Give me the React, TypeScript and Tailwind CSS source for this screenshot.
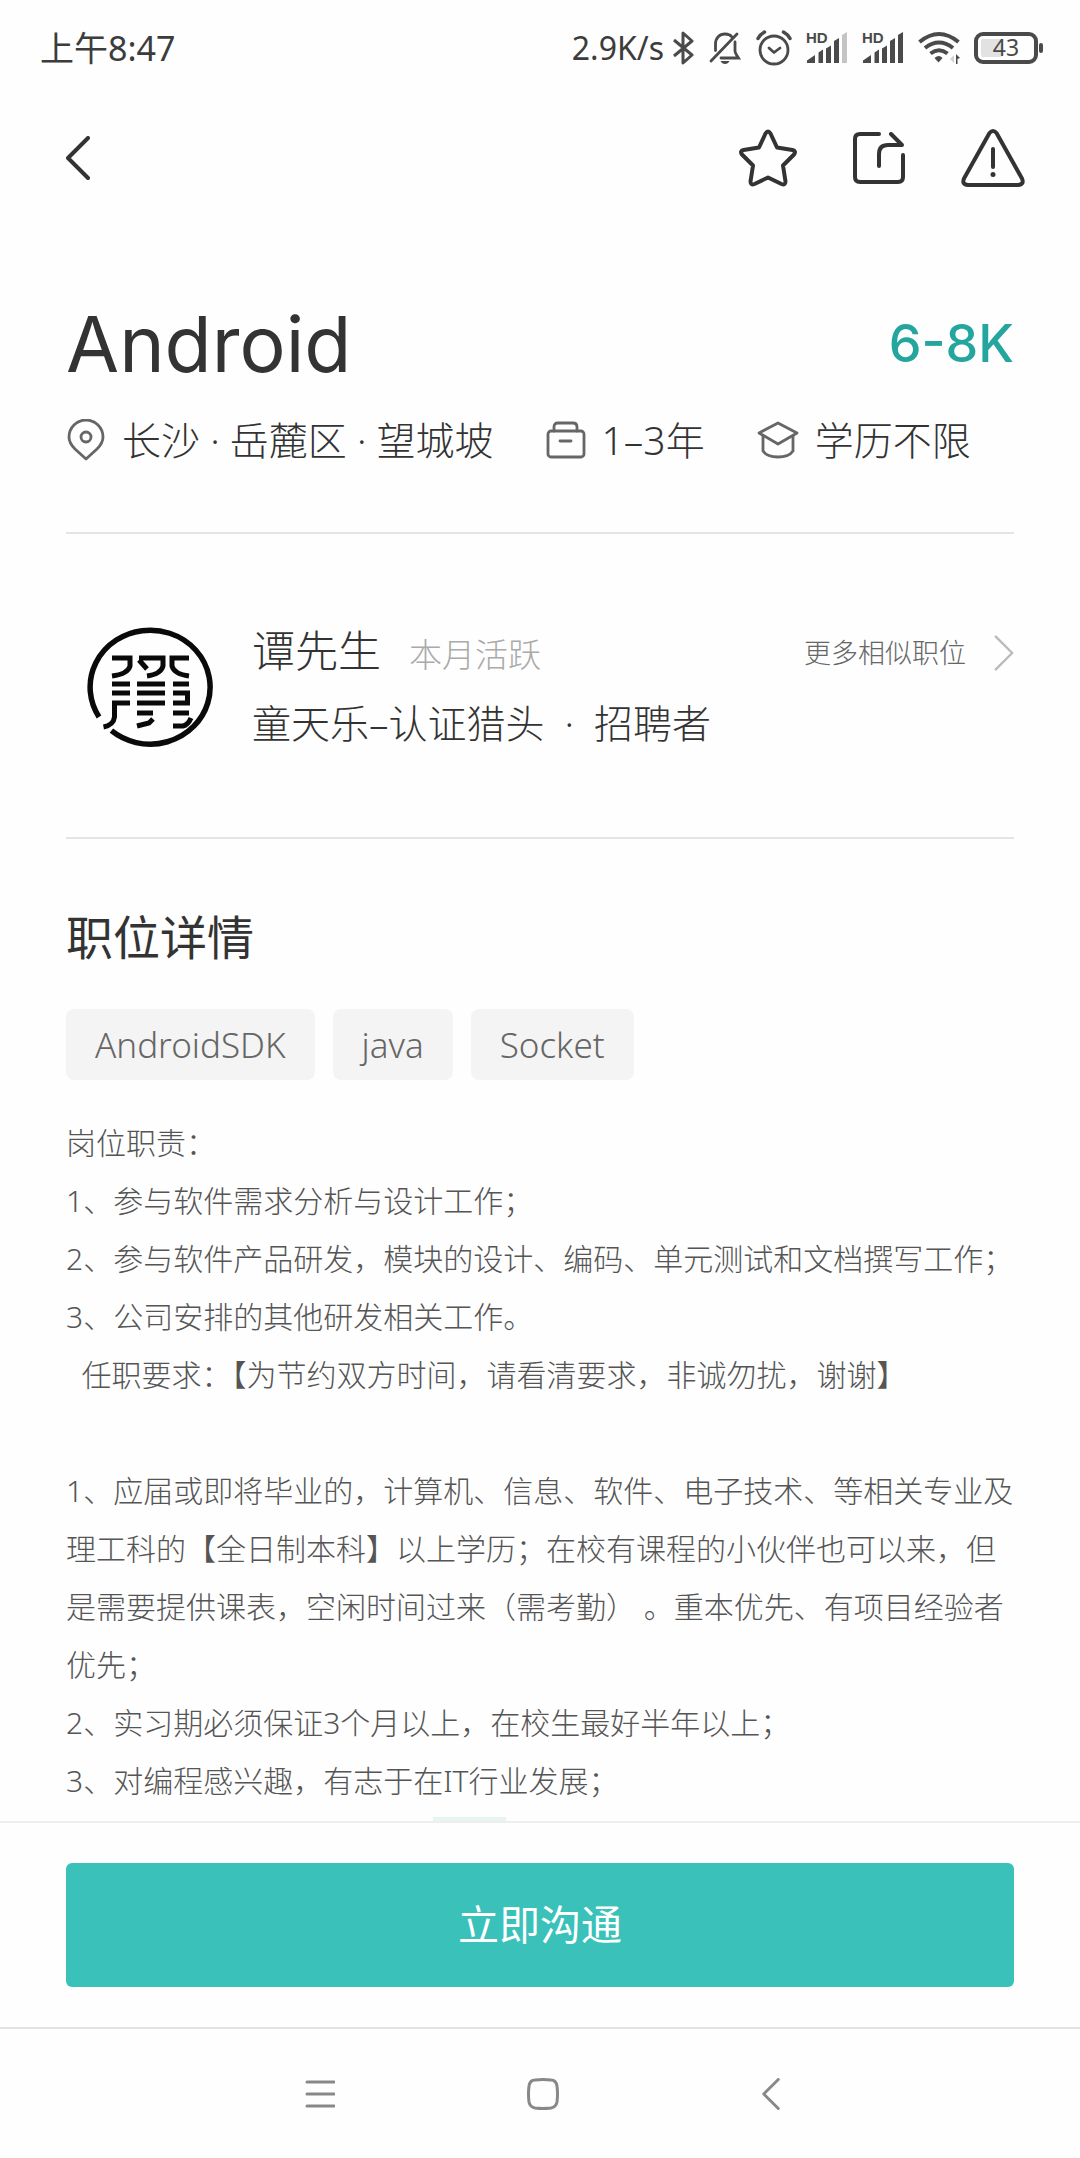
import type { ReactNode } from "react";

const tags = ["AndroidSDK", "java", "Socket"];

const details = [
  "岗位职责：",
  "1、参与软件需求分析与设计工作；",
  "2、参与软件产品研发，模块的设计、编码、单元测试和文档撰写工作；",
  "3、公司安排的其他研发相关工作。",
  "  任职要求：【为节约双方时间，请看清要求，非诚勿扰，谢谢】",
  "",
  "1、应届或即将毕业的，计算机、信息、软件、电子技术、等相关专业及理工科的【全日制本科】以上学历；在校有课程的小伙伴也可以来，但是需要提供课表，空闲时间过来（需考勤） 。重本优先、有项目经验者优先；",
  "2、实习期必须保证3个月以上，在校生最好半年以上；",
  "3、对编程感兴趣，有志于在IT行业发展；",
];

function BluetoothIcon() {
  return (
    <svg viewBox="0 0 22 36" className="h-9 w-[22px]" fill="none" stroke="#4a4a4a" strokeWidth="3" strokeLinejoin="round">
      <path d="M2 10l18 15-9 8V3l9 8L2 26" />
    </svg>
  );
}

function MutedBellIcon() {
  return (
    <svg viewBox="0 0 34 36" className="h-9 w-[34px]" fill="none" stroke="#4a4a4a" strokeWidth="2.8" strokeLinecap="round">
      <path d="M7.5 20.5V14c0-6 4-10 9.5-10 3 0 5.500 1 7 3M27 12v9c0 2 1.500 4 3.500 7H13" />
      <path d="M3 31L29 4" />
      <path d="M12.500 31h9c-1 2-2.500 3-4.500 3s-3.500-1-4.500-3z" fill="#4a4a4a" stroke="none" />
    </svg>
  );
}

function AlarmIcon() {
  return (
    <svg viewBox="0 0 36 36" className="size-9" fill="none" stroke="#4a4a4a" strokeWidth="2.8" strokeLinecap="round" strokeLinejoin="round">
      <circle cx="18" cy="20" r="14" />
      <path d="M13 18l5 4.500 6-4.500" />
      <path d="M2 8.500q2-4 6.500-6.500M34 8.500q-2-4-6.500-6.500" strokeWidth="3.500" />
    </svg>
  );
}

function SignalIcon({ weak }: { weak?: boolean }) {
  return (
    <svg viewBox="0 0 42 36" className="h-9 w-[42px]" fill="#4a4a4a">
      <text x="0" y="13" fontSize="15" fontWeight="700" fontFamily="Liberation Sans, sans-serif">HD</text>
      <path d="M1 33v-2.500l8-5.500v8zM12.500 33V22.500l4.500-3V33zM20 33V18.500l5-3V33zM28 33V11l5-3v25z" />
      <path d="M36 33V5l5-3v31z" fill={weak ? "#c4c4c4" : "#4a4a4a"} />
    </svg>
  );
}

function WifiIcon() {
  return (
    <svg viewBox="0 0 42 36" className="h-9 w-[42px]" fill="none" stroke="#4a4a4a" strokeWidth="4">
      <path d="M1.500 12q19.500-16 39 0M7 18q14-11 28 0M12.500 23.500q8.500-6.500 17 0" />
      <path d="M16.500 28q4.500-4 8 0l-4 4.500z" fill="#4a4a4a" stroke="none" />
      <path d="M38 24v10h1.500v-5l2.500-1z" fill="#4a4a4a" stroke="none" />
      <path d="M36 25v8l-4-4z" fill="#d0d0d0" stroke="none" />
    </svg>
  );
}

function BatteryIcon() {
  return (
    <svg viewBox="0 0 70 32" className="h-8 w-[70px]">
      <rect x="2" y="2" width="60" height="28" rx="7" fill="none" stroke="#4a4a4a" strokeWidth="4" />
      <rect x="7" y="7" width="21" height="18" rx="2" fill="#e2e2e2" />
      <rect x="65" y="11" width="4" height="10" rx="2" fill="#4a4a4a" />
      <text x="32" y="24" textAnchor="middle" fontSize="23" fill="#4a4a4a" fontFamily="Noto Sans, sans-serif">43</text>
    </svg>
  );
}

function IconButton({ label, children }: { label: string; children: ReactNode }) {
  return (
    <button type="button" aria-label={label} className="flex items-center justify-center">
      {children}
    </button>
  );
}

function Chevron({ className }: { className: string }) {
  return (
    <svg viewBox="0 0 24 44" className={className} fill="none" stroke="currentColor" strokeLinecap="round" strokeLinejoin="round">
      <path d="M22 2L2 22l20 20" />
    </svg>
  );
}

function Avatar() {
  return (
    <svg viewBox="0 0 128 122" className="h-[122px] w-32 shrink-0" fill="none" stroke="#0a0a0a" strokeWidth="5">
      <path d="M13 91A60 57 0 1 1 25.400 104.700" strokeWidth="5.500" />
      <path d="M26 32h18v8q-2 8-18 10M53 32h24v8q-2 8-16 10M53 34l8 9M103 32H86v8q2 8 17 10" />
      <path d="M26 58h18M51 58h28M87 58h16M26 67h18M51 67h28M51 77h28M87 67h14.500v10H87M87 87h16" />
      <path d="M44 77H28.500v14q-1 8-11 10M51 87h16M67 93l-4 4-12 3M87 100h10q5-1 8-8" />
    </svg>
  );
}

export default function App() {
  return (
    <div className="flex min-h-screen flex-col bg-[#fefefe] font-['Noto_Sans','Noto_Sans_CJK_SC',sans-serif] font-light text-[#333333]">
      <header>
        <div className="flex h-24 items-center justify-between pr-9 pl-10 font-normal text-[#3c3c3c]">
          <span className="text-[34px]">上午8:47</span>
          <div className="flex items-center">
            <span className="mr-2 text-[32px]">2.9K/s</span>
            <div className="flex items-center gap-[14px]">
              <BluetoothIcon />
              <MutedBellIcon />
              <AlarmIcon />
              <SignalIcon weak />
              <SignalIcon />
              <WifiIcon />
              <BatteryIcon />
            </div>
          </div>
        </div>
        <nav className="flex h-[124px] items-center justify-between pr-[55px] pl-[66px]">
          <IconButton label="返回">
            <Chevron className="h-11 w-6 stroke-4" />
          </IconButton>
          <div className="flex items-center gap-14">
            <IconButton label="收藏">
              <svg viewBox="0 0 58 58" className="size-[58px]" fill="none" stroke="currentColor" strokeWidth="4" strokeLinejoin="round">
                <path d="M26.500 4.500q2.500-4 5 0l6.500 14 15.500 2.500q4 1 1.500 4.500L44 36.500l2.500 16q0 4-4 2.500L29 48.500 15.500 55q-4 1.500-4-2.500l2.500-16L3 25.500q-2.500-3.500 1.500-4.500L20 18.500z" />
              </svg>
            </IconButton>
            <IconButton label="分享">
              <svg viewBox="0 0 52 52" className="size-[52px]" fill="none" stroke="currentColor" strokeWidth="4" strokeLinecap="round" strokeLinejoin="round">
                <path d="M26 2H7q-5 0-5 5v38q0 5 5 5h38q5 0 5-5V23" />
                <path d="M26 34V22q0-9 9-9h14L38 2" />
              </svg>
            </IconButton>
            <IconButton label="举报">
              <svg viewBox="0 0 64 58" className="h-[58px] w-16" fill="none" stroke="currentColor" strokeWidth="4" strokeLinecap="round" strokeLinejoin="round">
                <path d="M28.500 4q3.500-4 7 0L61 49.500q2.500 6-4 6.500H7q-6.500-.5-4-6.500z" />
                <path d="M32 20v18" />
                <path d="M32 45.500v.1" strokeWidth="5" />
              </svg>
            </IconButton>
          </div>
        </nav>
      </header>

      <main className="flex-1 px-[66px] pt-[84px]">
        <section className="border-b-2 border-[#e4e4e4] pb-16">
          <div className="flex items-center justify-between font-[Inter]">
            <h1 className="text-[77px] leading-20 font-normal">Android</h1>
            <p className="text-[52px] leading-20 font-medium text-[#24a69f]">6-8K</p>
          </div>
          <ul className="mt-7 flex items-center gap-[52px] text-[39px] leading-14">
            <li className="flex items-center gap-4">
              <svg viewBox="0 0 40 42" className="h-[42px] w-10" fill="none" stroke="#666666" strokeWidth="2.8" strokeLinejoin="round">
                <path d="M20 40L9 30Q3 24 3 18a17 17 0 0 1 34 0q0 6-6 12z" />
                <circle cx="20" cy="18" r="5" />
              </svg>
              长沙 · 岳麓区 · 望城坡
            </li>
            <li className="flex items-center gap-4">
              <svg viewBox="0 0 40 38" className="h-[38px] w-10" fill="none" stroke="#666666" strokeWidth="2.8" strokeLinecap="round" strokeLinejoin="round">
                <rect x="2" y="10" width="36" height="26" rx="3" />
                <path d="M8 10V6q0-4 4-4h15q4 0 4 4v4M14 20h11" />
              </svg>
              1–3年
            </li>
            <li className="flex items-center gap-4">
              <svg viewBox="0 0 42 38" className="h-[38px] w-[42px]" fill="none" stroke="#666666" strokeWidth="2.8" strokeLinejoin="round">
                <path d="M21 2l19 10-19 11L2 12z" />
                <path d="M6 15v15q4 6 15 6t15-6V15" />
              </svg>
              学历不限
            </li>
          </ul>
        </section>

        <section className="flex items-center gap-[38px] border-b-2 border-[#e4e4e4] pt-[89px] pb-[86px] pl-5">
          <Avatar />
          <div className="flex-1">
            <div className="flex items-center justify-between">
              <h2 className="text-[43px] leading-14">
                谭先生<span className="ml-7 text-[33px] text-[#aaaaaa]">本月活跃</span>
              </h2>
              <a href="#similar" className="flex items-center gap-7 text-[27px] text-[#666666]">
                更多相似职位
                <Chevron className="h-9 w-5 rotate-180 stroke-3 text-[#bbbbbb]" />
              </a>
            </div>
            <p className="mt-3 text-[39px] leading-14">
              童天乐–认证猎头<span className="mx-5">·</span>招聘者
            </p>
          </div>
        </section>

        <section className="pt-[66px]">
          <h2 className="text-[47px] leading-16 font-normal">职位详情</h2>
          <ul className="mt-10 flex gap-[18px]">
            {tags.map((tag) => (
              <li key={tag} className="rounded-lg bg-[#f4f4f4] px-[29px] text-[35px] leading-[71px] text-[#666666]">
                {tag}
              </li>
            ))}
          </ul>
          <div className="mt-[34px] text-[30px] leading-[58px] whitespace-pre-wrap text-[#555555]">
            {details.map((line, i) => (
              <p key={i} className="min-h-[58px]">{line}</p>
            ))}
          </div>
        </section>
      </main>

      <div className="ml-[433px] h-1 w-[73px] bg-[#e8f4f1]" />
      <footer>
        <div className="border-t-2 border-[#eeeeee] px-[66px] py-10">
          <button type="button" className="h-[124px] w-full rounded-md bg-[#39c1ba] text-[41px] font-normal text-white">
            立即沟通
          </button>
        </div>
        <nav className="flex h-[131px] items-center justify-center gap-48 border-t-2 border-[#e2e2e2] pl-4 text-[#888888]">
          <IconButton label="菜单">
            <svg viewBox="0 0 30 30" className="size-[30px]" fill="none" stroke="currentColor" strokeWidth="3" strokeLinecap="round">
              <path d="M2 3h27M2 15h27M2 27h27" />
            </svg>
          </IconButton>
          <IconButton label="主页">
            <svg viewBox="0 0 32 32" className="size-8" fill="none" stroke="currentColor" strokeWidth="3">
              <path d="M8 2q8-1 16 0 5 0 6 6 1 8 0 16-1 5-6 6-8 1-16 0-5-1-6-6-1-8 0-16 1-6 6-6z" />
            </svg>
          </IconButton>
          <IconButton label="返回上一页">
            <Chevron className="h-8 w-10 stroke-4" />
          </IconButton>
        </nav>
      </footer>
    </div>
  );
}
